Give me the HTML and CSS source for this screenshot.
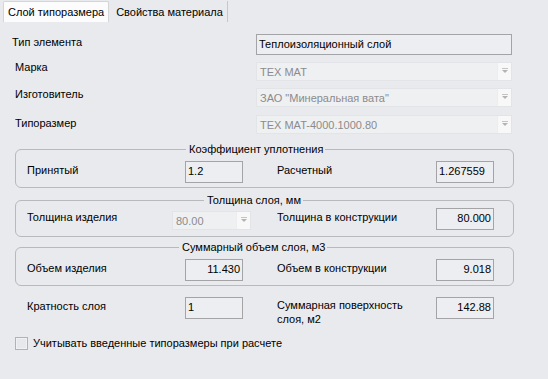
FILE: index.html
```html
<!DOCTYPE html>
<html lang="ru">
<head>
<meta charset="utf-8">
<title>Слой типоразмера</title>
<link rel="stylesheet" href="styles.css">
</head>
<body>
<div class="window">
  <div class="tabs">
    <div class="tab active">Слой типоразмера</div>
    <div class="tab">Свойства материала</div>
  </div>

  <div class="top">
    <div class="trow r1">
      <div class="tlabel">Тип элемента</div>
      <div class="textbox">Теплоизоляционный слой</div>
    </div>
    <div class="trow r2">
      <div class="tlabel">Марка</div>
      <div class="combo wide"><span class="ctext">TEX MAT</span><span class="cbtn"><i></i></span></div>
    </div>
    <div class="trow r3">
      <div class="tlabel">Изготовитель</div>
      <div class="combo wide"><span class="ctext">ЗАО "Минеральная вата"</span><span class="cbtn"><i></i></span></div>
    </div>
    <div class="trow r4">
      <div class="tlabel">Типоразмер</div>
      <div class="combo wide"><span class="ctext">TEX MAT-4000.1000.80</span><span class="cbtn"><i></i></span></div>
    </div>
  </div>

  <fieldset class="group g1">
    <legend class="gtitle t1">Коэффициент уплотнения</legend>
    <div class="grow">
      <div class="glabel l1">Принятый</div>
      <div class="num left">1.2</div>
      <div class="glabel l2">Расчетный</div>
      <div class="num left">1.267559</div>
    </div>
  </fieldset>

  <fieldset class="group g2">
    <legend class="gtitle t2">Толщина слоя, мм</legend>
    <div class="grow">
      <div class="glabel l1 short">Толщина изделия</div>
      <div class="combo small"><span class="ctext">80.00</span><span class="cbtn"><i></i></span></div>
      <div class="glabel l2">Толщина в конструкции</div>
      <div class="num">80.000</div>
    </div>
  </fieldset>

  <fieldset class="group g3">
    <legend class="gtitle t3">Суммарный объем слоя, м3</legend>
    <div class="grow">
      <div class="glabel l1">Объем изделия</div>
      <div class="num">11.430</div>
      <div class="glabel l2">Объем в конструкции</div>
      <div class="num">9.018</div>
    </div>
  </fieldset>

  <div class="frow">
    <div class="glabel l1">Кратность слоя</div>
    <div class="num left">1</div>
    <div class="glabel l2 two">Суммарная поверхность<br>слоя, м2</div>
    <div class="num">142.88</div>
  </div>

  <label class="check">
    <span class="box"></span>
    <span>Учитывать введенные типоразмеры при расчете</span>
  </label>
</div>
</body>
</html>
```

FILE: styles.css
```css
* { box-sizing: border-box; }

html, body {
  margin: 0;
  padding: 0;
  background: #e9eaee;
}

body {
  width: 548px;
  height: 379px;
  overflow: hidden;
  font-family: "Liberation Sans", Arial, sans-serif;
  font-size: 11px;
  line-height: 14px;
  color: #000;
}

.window {
  position: relative;
  width: 548px;
  height: 379px;
}

/* tabs */
.tabs {
  display: flex;
  padding: 1px 0 0 3px;
  height: 22px;
}
.tab {
  height: 21px;
  padding: 4px 4px 0 7px;
  border-right: 1px solid #c6c7cb;
  color: #000;
  white-space: nowrap;
}
.tab.active {
  background: #fcfcfd;
  border: 1px solid #d4d5d9;
  border-bottom: none;
  border-radius: 2px 2px 0 0;
  padding: 3px 4px 0 4px;
}

/* top section */
.top {
  padding-top: 12px;
}
.trow {
  display: flex;
  align-items: flex-start;
}
.tlabel {
  width: 244px;
  padding-left: 15px;
}
.r1 { height: 21px; }
.r1 .tlabel { margin-top: 1px; padding-left: 12px; }
.r2 { height: 18px; margin-top: 7px; }
.r2 .tlabel { margin-top: -2px; }
.r3 { height: 18px; margin-top: 8px; }
.r3 .tlabel { margin-top: -1px; }
.r4 { height: 18px; margin-top: 9px; }
.r4 .tlabel { margin-top: 1px; }

.textbox {
  margin-left: 12px;
  width: 256px;
  height: 21px;
  border: 1px solid #a4a4a6;
  background: #eceef1;
  padding: 2px 2px 0 2px;
  color: #000;
}

.combo {
  display: flex;
  align-items: stretch;
  background: #eff0f2;
  border: 1px solid #e3e4e8;
  color: #8b8b8d;
}
.combo.wide {
  margin-left: 12px;
  width: 256px;
  height: 19px;
}
.ctext {
  flex: 1;
  padding: 2px 0 0 3px;
  white-space: nowrap;
}
.cbtn {
  width: 14px;
  background: #f8f8f9;
  border-left: 1px solid #ededf0;
  display: flex;
  align-items: center;
  justify-content: center;
}
.cbtn i {
  display: block;
  width: 0;
  height: 0;
  border-left: 3px solid transparent;
  border-right: 3px solid transparent;
  border-top: 3px solid #b3b3b6;
  position: relative;
}
.cbtn i::before {
  content: "";
  position: absolute;
  left: -3px;
  top: -5px;
  width: 6px;
  height: 1px;
  background: #c4c4c7;
}

/* groups */
.group {
  margin: 0 0 0 15px;
  width: 499px;
  border: 1px solid #b8b9bd;
  border-radius: 6px;
  padding: 0 0 0 11px;
  min-width: 0;
}
.gtitle {
  padding: 0 2px 0 3px;
  line-height: 14px;
}
.t1 { margin-left: 159px; }
.t2 { margin-left: 177px; }
.t3 { margin-left: 152px; }

.g1 { margin-top: 9px; height: 46px; }
.g1 .grow { margin-top: 5px; }
.g2 { margin-top: 5px; height: 44px; }
.g2 .grow { margin-top: 1px; }
.g3 { margin-top: 3px; height: 46px; }
.g3 .grow { margin-top: 5px; }

.grow, .frow {
  display: flex;
  align-items: flex-start;
  height: 22px;
}
.frow {
  margin-top: 11px;
  padding-left: 27px;
}
.glabel {
  white-space: nowrap;
  margin-top: 2px;
}
.glabel.l1 { width: 158px; }
.glabel.l1.short { width: 145px; }
.glabel.l2 { width: 159px; margin-left: 34px; }
.glabel.two { line-height: 14px; margin-top: 1px; }
.short ~ .glabel.l2 { margin-left: 26px; }

.num {
  width: 58px;
  height: 22px;
  border: 1px solid #a4a4a6;
  background: #eceef1;
  padding: 2px 2px 0 2px;
  text-align: right;
  color: #000;
}
.num.left { text-align: left; }

.combo.small {
  width: 79px;
  height: 19px;
  margin-top: 3px;
}

/* checkbox */
.check {
  display: flex;
  align-items: center;
  margin: 17px 0 0 15px;
  gap: 5px;
}
.box {
  width: 13px;
  height: 13px;
  border: 1px solid #b1b2b5;
  background: #e7e8eb;
  box-shadow: inset 0 0 0 1px #f1f1f3;
}
```
